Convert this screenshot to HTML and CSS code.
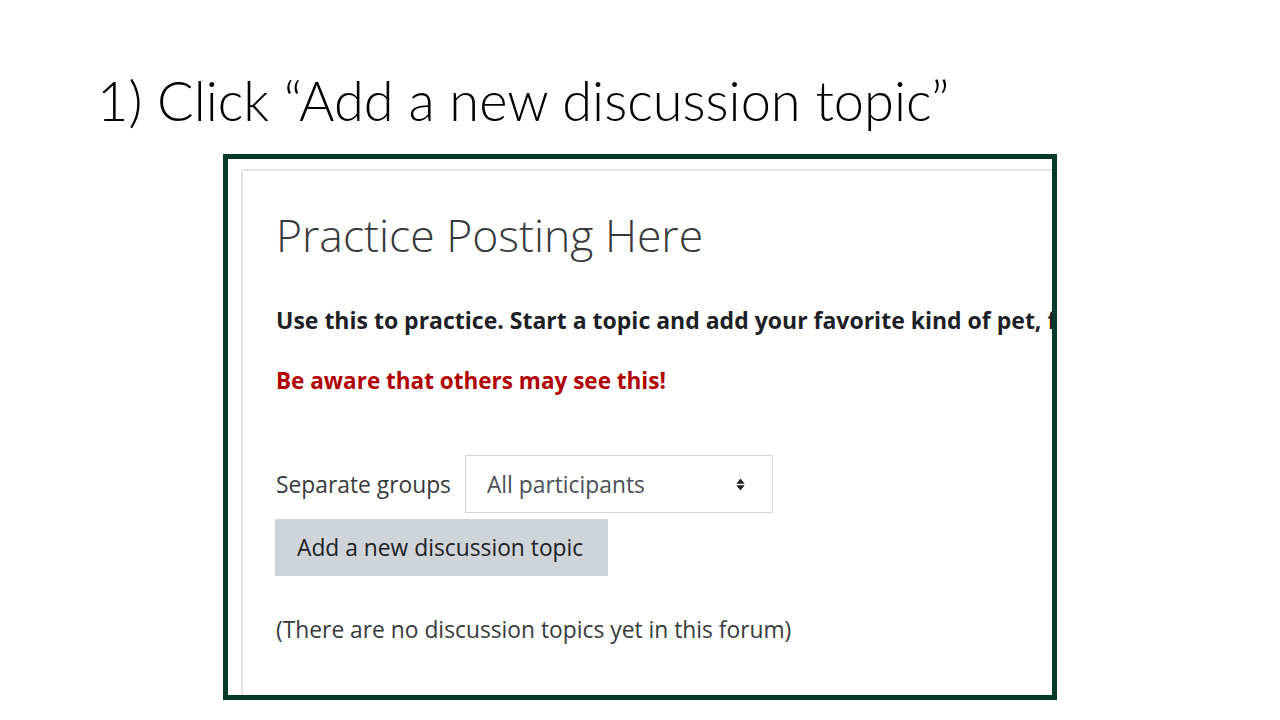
FILE: index.html
```html
<!DOCTYPE html>
<html lang="en">
<head>
<meta charset="utf-8">
<title>Add a new discussion topic</title>
<link rel="stylesheet" href="styles.css">
</head>
<body>
<div class="slide">
  <h1 class="slide-title">1) Click “Add a new discussion topic”</h1>
  <div class="shot">
    <div class="card">
      <h2 class="forum-title">Practice Posting Here</h2>
      <p class="intro">Use this to practice. Start a topic and add your favorite kind of pet, fruit, or movie.</p>
      <p class="warn">Be aware that others may see this!</p>
      <div class="groups">
        <span class="groups-label">Separate groups</span>
        <div class="select">
          <span>All participants</span>
          <svg class="sort-icon" width="9" height="13" viewBox="0 0 9 13"><path d="M0.3 5.8 L4.5 0.6 L8.7 5.8 Z M0.3 7.2 L8.7 7.2 L4.5 12.4 Z" fill="#222222"/></svg>
        </div>
      </div>
      <button class="add-btn" type="button">Add a new discussion topic</button>
      <p class="empty">(There are no discussion topics yet in this forum)</p>
    </div>
  </div>
</div>
</body>
</html>
```
FILE: styles.css
```css
html, body {
  margin: 0;
  padding: 0;
  background: #ffffff;
}
body {
  width: 1280px;
  height: 720px;
  overflow: hidden;
}
.slide {
  padding: 68px 0 0 97px;
}
.slide-title {
  margin: 0;
  font-family: "Lato", sans-serif;
  font-weight: 300;
  font-size: 54.2px;
  line-height: 65px;
  color: #000000;
  white-space: nowrap;
}
.shot {
  box-sizing: border-box;
  margin: 21px 0 0 126px;
  width: 834px;
  height: 546px;
  border: 5px solid #02392a;
  background: #ffffff;
  overflow: hidden;
  display: flex;
  flex-direction: column;
}
.card {
  flex: 1;
  margin: 10px 0 0 13px;
  border-top: 2px solid #e4e4e4;
  border-left: 2px solid #e4e4e4;
  padding: 37px 0 0 33px;
  font-family: "Open Sans", sans-serif;
  color: #1d2125;
  white-space: nowrap;
}
.forum-title {
  margin: 0;
  font-family: "Open Sans", sans-serif;
  font-weight: 300;
  font-size: 44.5px;
  line-height: 54px;
  color: #373a3c;
}
.intro {
  margin: 43px 0 0;
  font-weight: 700;
  font-size: 23px;
  line-height: 30px;
  color: #1d2125;
}
.warn {
  margin: 31px 0 0;
  font-weight: 700;
  font-size: 22.5px;
  line-height: 30px;
  color: #b00000;
}
.groups {
  margin-top: 59px;
  display: flex;
  align-items: center;
  gap: 14px;
  font-size: 22.8px;
  color: #373a3c;
}
.select {
  box-sizing: border-box;
  width: 308px;
  height: 58px;
  border: 1px solid #d3d7db;
  padding: 0 27px 0 21px;
  display: flex;
  align-items: center;
  justify-content: space-between;
  color: #495057;
}
.sort-icon {
  display: block;
}
.add-btn {
  display: block;
  margin: 6px 0 0 -1px;
  box-sizing: border-box;
  height: 57px;
  padding: 0 25px 0 22px;
  border: 0;
  border-radius: 0;
  background: #ced4da;
  font-family: "Open Sans", sans-serif;
  font-size: 22.8px;
  color: #1d2125;
  line-height: 57px;
}
.empty {
  margin: 39px 0 0;
  font-size: 22.8px;
  line-height: 30px;
  color: #373a3c;
}
```
